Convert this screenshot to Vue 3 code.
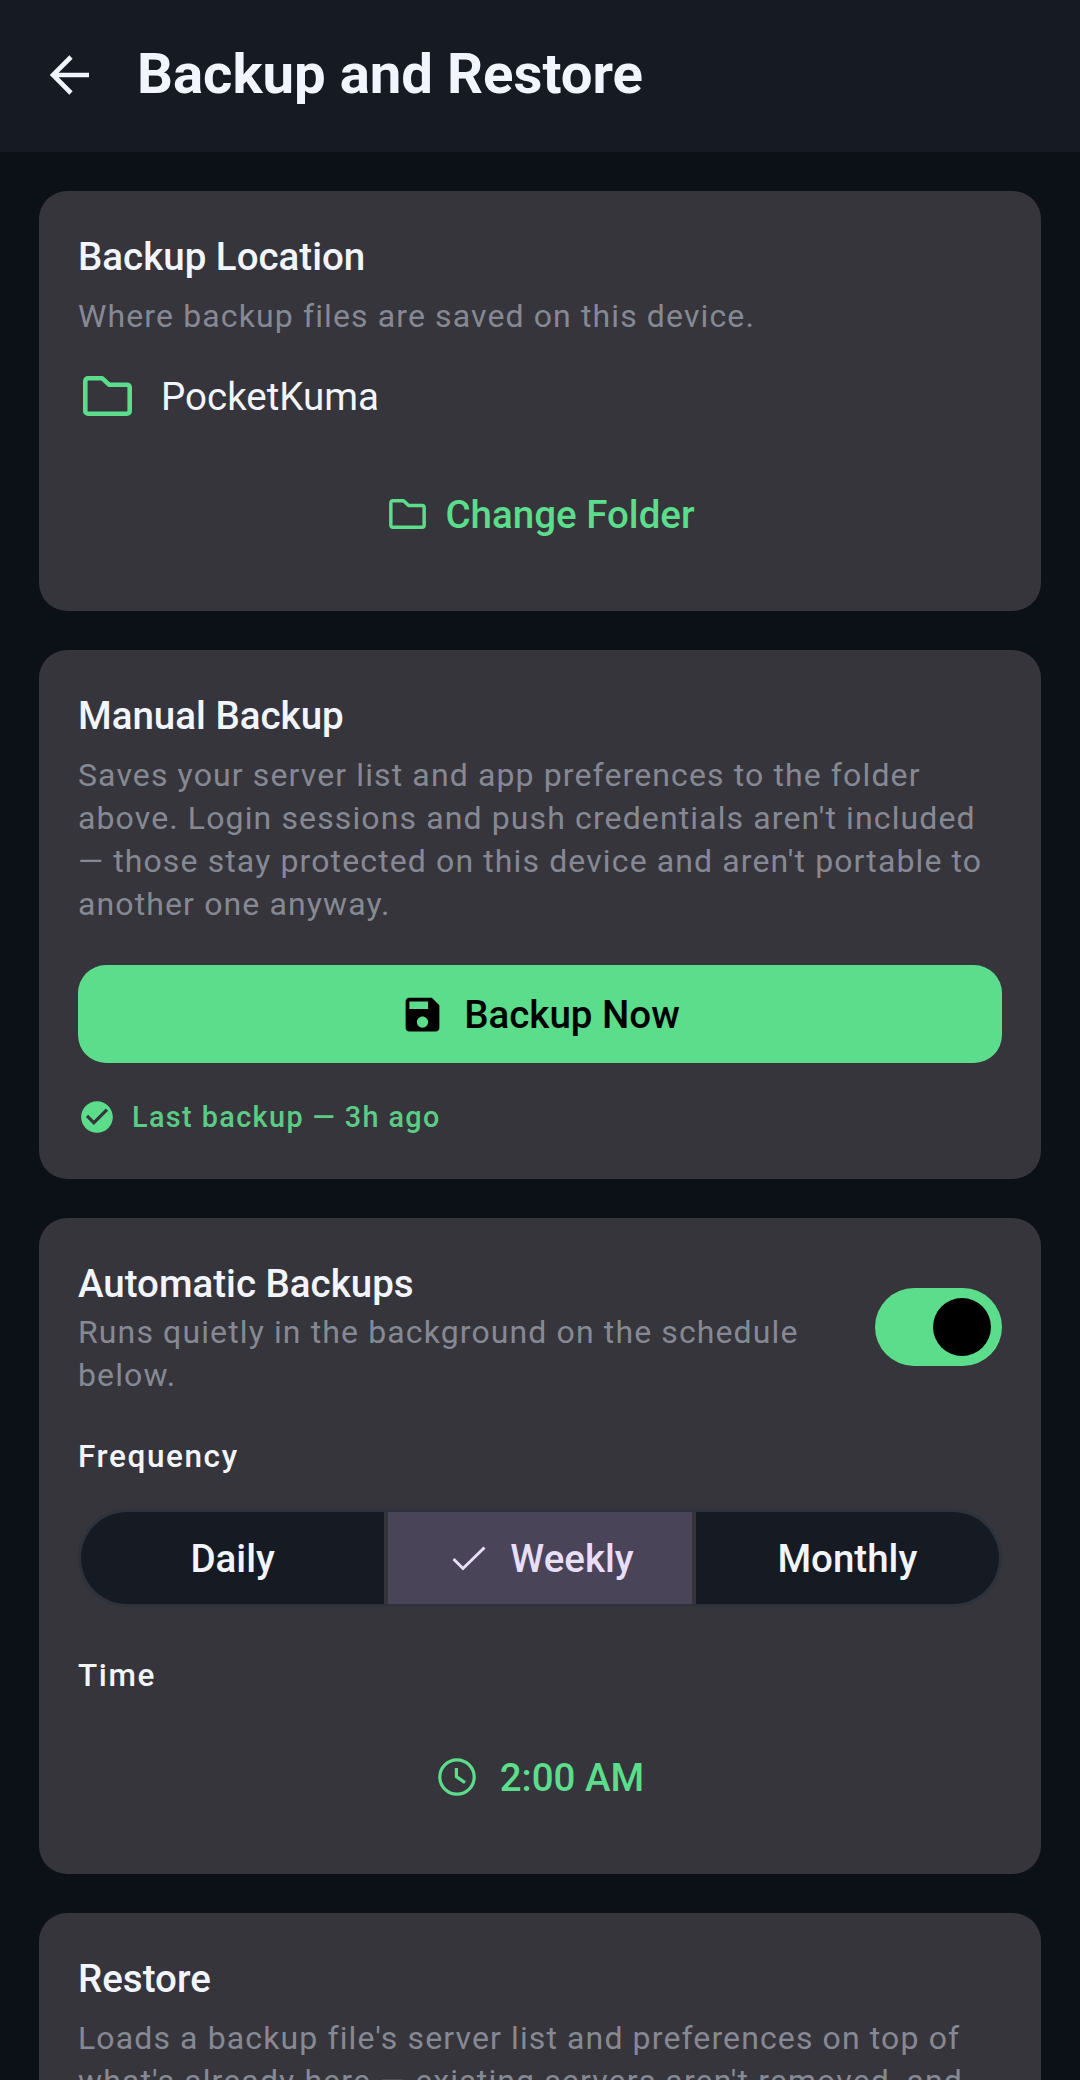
<script setup>
const frequencies = ['Daily', 'Weekly', 'Monthly']
const folderPath = 'M5 2.3H18.5a2 2 0 0 1 1.4.6L26 8.7H44a2.7 2.7 0 0 1 2.7 2.7V35a2.7 2.7 0 0 1-2.7 2.7H5A2.7 2.7 0 0 1 2.3 35V5A2.7 2.7 0 0 1 5 2.3z'
</script>

<template>
  <div class="page">
    <header class="bar">
      <svg class="back" viewBox="0 0 40 40"><path d="M39 20H3M21 2 3 20l18 18" /></svg>
      <h1>Backup and Restore</h1>
    </header>

    <main class="list">
      <section class="card">
        <h2>Backup Location</h2>
        <p class="sub">Where backup files are saved on this device.</p>
        <div class="folder-row">
          <svg class="folder" viewBox="0 0 49 40"><path :d="folderPath" /></svg>
          <span>PocketKuma</span>
        </div>
        <button class="text-btn change">
          <svg class="folder-sm" viewBox="0 0 49 40"><path :d="folderPath" /></svg>
          Change Folder
        </button>
      </section>

      <section class="card">
        <h2>Manual Backup</h2>
        <p class="sub">Saves your server list and app preferences to the folder above. Login sessions and push credentials aren't included — those stay protected on this device and aren't portable to another one anyway.</p>
        <button class="primary">
          <svg viewBox="0 0 24 24"><path d="M17 3H5c-1.11 0-2 .9-2 2v14c0 1.1.89 2 2 2h14c1.1 0 2-.9 2-2V7l-4-4zm-5 16c-1.66 0-3-1.34-3-3s1.34-3 3-3 3 1.34 3 3-1.34 3-3 3zm3-10H5V5h10v4z" /></svg>
          Backup Now
        </button>
        <div class="status">
          <svg viewBox="0 0 24 24"><path d="M12 2C6.48 2 2 6.48 2 12s4.48 10 10 10 10-4.48 10-10S17.52 2 12 2zm-2 15l-5-5 1.41-1.41L10 14.17l7.59-7.59L19 8l-9 9z" /></svg>
          Last backup — 3h ago
        </div>
      </section>

      <section class="card">
        <div class="auto-head">
          <div class="auto-text">
            <h2>Automatic Backups</h2>
            <p class="sub">Runs quietly in the background on the schedule below.</p>
          </div>
          <div class="switch"><span class="thumb"></span></div>
        </div>
        <h3 class="freq-label">Frequency</h3>
        <div class="segments">
          <button v-for="f in frequencies" :key="f" class="seg" :class="{ on: f === 'Weekly' }">
            <svg v-if="f === 'Weekly'" viewBox="0 0 34 25"><path d="M1.5 13 11 22.5 32.5 1.5" /></svg>
            {{ f }}
          </button>
        </div>
        <h3 class="time-label">Time</h3>
        <button class="text-btn time">
          <svg viewBox="0 0 38 38"><circle cx="19" cy="19" r="17.2" /><path d="M18.4 10v8.6l8.6 6" /></svg>
          2:00 AM
        </button>
      </section>

      <section class="card">
        <h2>Restore</h2>
        <p class="sub">Loads a backup file's server list and preferences on top of what's already here — existing servers aren't removed, and</p>
      </section>
    </main>
  </div>
</template>

<style>
html, body { margin: 0; background: #0c1017; }
</style>

<style scoped>
.page {
  height: 2080px;
  overflow: hidden;
  background: #0c1017;
  font-family: Roboto, "Liberation Sans", sans-serif;
  color: #f2f5fd;
}

.bar {
  height: 152px;
  display: flex;
  align-items: center;
  padding-left: 50px;
  background: #161b23;
  box-sizing: border-box;
}
.back {
  width: 40px;
  height: 40px;
  margin: -2px 47px 0 0;
  fill: none;
  stroke: #f2f5fd;
  stroke-width: 4.6;
}
h1 { margin: 0 0 4px; font-size: 56.3px; line-height: 68px; font-weight: 700; }

.list { display: flex; flex-direction: column; gap: 39px; padding: 39px 39px 0; }

.card {
  background: #36353b;
  border-radius: 28px;
  padding: 39px;
}
h2 { margin: 0; font-size: 38.5px; line-height: 54px; font-weight: 500; }
h3 { margin: 0; font-size: 31.5px; line-height: 40px; font-weight: 500; letter-spacing: 1.6px; }
.sub { margin: 11px 0 0; font-size: 32px; line-height: 43px; letter-spacing: 1.12px; color: #868994; }

button { border: 0; background: none; font-family: inherit; padding: 0; }

.folder-row { display: flex; align-items: center; gap: 29px; margin-top: 29px; padding-left: 5px; font-size: 38.5px; height: 58px; }
.folder { width: 49px; height: 40px; fill: none; stroke: #5bdd8b; stroke-width: 4.6; stroke-linejoin: round; }

.text-btn {
  width: calc(100% - 6px);
  height: 92px;
  margin: 0 3px 12px;
  display: flex;
  align-items: center;
  justify-content: center;
  box-sizing: border-box;
  border: 2px solid #36373d;
  border-radius: 46px;
  color: #5bdd8b;
  font-size: 38.5px;
  font-weight: 500;
}
.change { margin-top: 43px; gap: 19px; padding-left: 4px; }
.folder-sm { width: 37px; height: 30px; fill: none; stroke: #5bdd8b; stroke-width: 4.6; stroke-linejoin: round; }

.primary {
  width: 100%;
  height: 98px;
  margin-top: 39px;
  display: flex;
  align-items: center;
  justify-content: center;
  gap: 19px;
  background: #5bdd8b;
  border-radius: 28px;
  color: #000;
  font-size: 38.5px;
  font-weight: 470;
}
.primary svg { width: 45px; height: 45px; fill: #000; }

.status {
  display: flex;
  align-items: center;
  gap: 16px;
  margin-top: 33px;
  margin-bottom: 2px;
  height: 42px;
  color: #5bcb85;
  font-size: 28.8px;
  font-weight: 500;
  letter-spacing: 1.4px;
}
.status svg { width: 38px; height: 38px; fill: #5bdd8b; }

.auto-head { display: flex; align-items: center; justify-content: space-between; gap: 40px; }
.auto-text .sub { margin-top: 0; }
.switch {
  flex: none;
  width: 127px;
  height: 78px;
  border-radius: 39px;
  background: #5bdd8b;
  position: relative;
}
.thumb {
  position: absolute;
  top: 10px;
  right: 11px;
  width: 58px;
  height: 58px;
  border-radius: 50%;
  background: #000;
}

.freq-label { margin-top: 40px; }
.segments {
  display: flex;
  gap: 4px;
  margin-top: 32px;
  height: 98px;
  box-sizing: border-box;
  border: 3px solid #2e333b;
  border-radius: 49px;
  overflow: hidden;
  background: #33353b;
}
.seg {
  flex: 0 0 calc((100% - 8px) / 3);
  box-sizing: border-box;
  display: flex;
  align-items: center;
  justify-content: center;
  gap: 24px;
  background: #161b23;
  color: #f2f5fd;
  font-size: 38.5px;
  font-weight: 470;
}
.seg.on { padding-left: 6px; background: #4a4459; color: #e8def8; }
.seg svg { width: 34px; height: 25px; fill: none; stroke: #e8def8; stroke-width: 3; }

.time-label { margin-top: 49px; }
.time { margin-top: 35px; gap: 24px; padding-left: 2px; }
.time svg { width: 38px; height: 38px; fill: none; stroke: #5bdd8b; stroke-width: 3.2; }
</style>
